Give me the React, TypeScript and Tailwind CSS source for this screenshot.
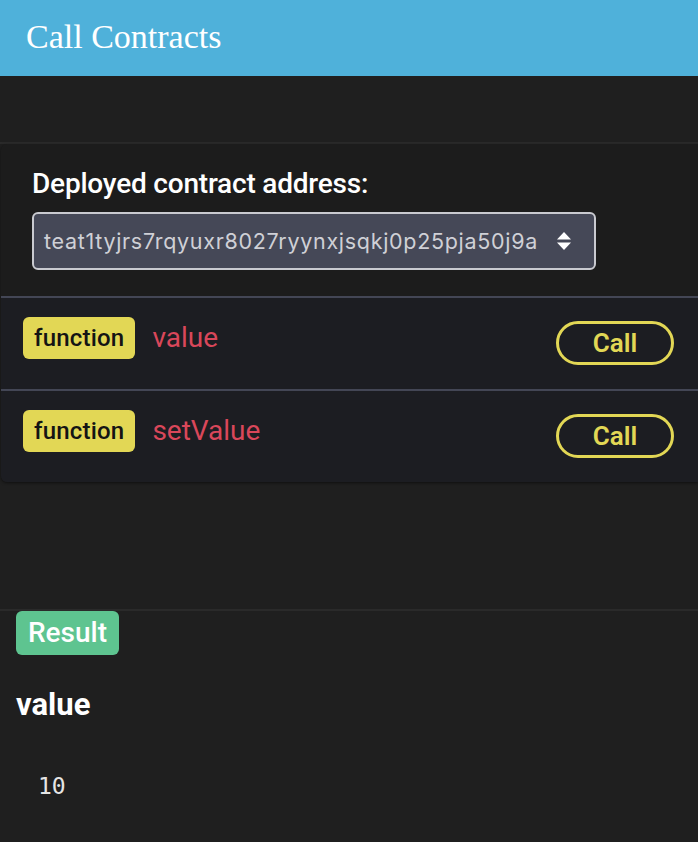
const rows = ["value", "setValue"];

const SortArrows = () => (
  <svg width="16" height="20" viewBox="0 0 16 20" className="shrink-0">
    <path d="M8 1 L15 8.5 L1 8.5 Z" fill="#ffffff" />
    <path d="M8 19 L15 11.5 L1 11.5 Z" fill="#ffffff" />
  </svg>
);

const App = () => {
  return (
    <div className="min-h-screen bg-[#1f1f1f] font-['Roboto',sans-serif]">
      <div className="flex h-[76px] items-center bg-[#4fb1da] px-[26px]">
        <div className="pb-[3px] font-['Liberation_Serif',serif] text-[34px] text-white">
          Call Contracts
        </div>
      </div>

      <div className="h-[66px]" />

      <div className="border-t-2 border-[#2a2a2a]">
        <div className="ml-px overflow-hidden rounded-l-md bg-[#1c1c1c] shadow-[0_1px_3px_rgba(0,0,0,0.5)]">
          <div className="px-[31px] pt-[22px] pb-[26px]">
            <div className="text-[28px] font-medium leading-[36px] tracking-[-0.2px] text-white">
              Deployed contract address:
            </div>
            <div className="mt-[10px] flex h-[58px] w-[564px] items-center justify-between rounded-md border-2 border-[#c9cad0] bg-[#454857] pl-[10px] pr-[22px]">
              <span className="font-['Inter',sans-serif] text-[21.5px] tracking-[0.7px] text-[#cfd0d6]">
                teat1tyjrs7rqyuxr8027ryynxjsqkj0p25pja50j9a
              </span>
              <SortArrows />
            </div>
          </div>

          {rows.map((name) => (
            <div key={name} className="border-t-2 border-[#434655]">
              <div className="flex h-[91px] items-start justify-between bg-[#1c1d22] pl-[22px] pr-[24px] pt-[19px]">
                <div className="flex items-center gap-[17px]">
                  <span className="flex h-[42px] items-center rounded-md bg-[#e2d755] px-[11px] text-[24px] font-medium tracking-[0.2px] text-[#141414]">
                    function
                  </span>
                  <span className="text-[28px] text-[#d9475a]">{name}</span>
                </div>
                <button className="mt-[4px] flex h-[44px] w-[118px] items-center justify-center rounded-full border-[3px] border-[#e2d755] text-[26px] font-semibold text-[#e2d755]">
                  Call
                </button>
              </div>
            </div>
          ))}
        </div>
      </div>

      <div className="h-[127px]" />

      <div className="border-t-2 border-[#2a2a2a] px-[16px]">
        <span className="inline-flex h-[44px] items-center rounded-md bg-[#5ec490] px-[12px] text-[28px] font-medium text-white">
          Result
        </span>
        <div className="mt-[30px] text-[31px] font-bold leading-[40px] text-white">value</div>
        <pre className="mt-[44px] pl-[22px] font-['DejaVu_Sans_Mono',monospace] text-[23px] text-[#e5e5e5]">
          10
        </pre>
      </div>
    </div>
  );
};

export default App;
